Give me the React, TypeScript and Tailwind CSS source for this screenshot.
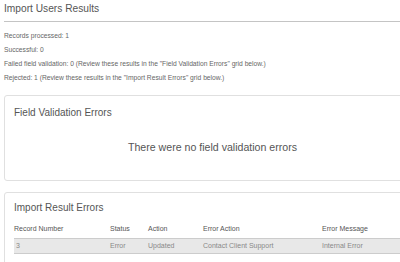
export default function App() {
  const font = { fontFamily: '"Liberation Sans", Arial, sans-serif' }
  return (
    <div className="w-[400px] h-[262px] overflow-hidden bg-white text-[#666]" style={font}>
      <div className="pl-[4px]">
        <h1 className="pt-[2px] text-[10.2px] leading-[14px] text-[#555]">Import Users Results</h1>
        <div className="mt-[5px] border-t border-[#c4c4c4]" />
        <div className="mt-[7px] flex flex-col text-[6.7px] leading-[14px] text-[#666]">
          <p>Records processed: 1</p>
          <p>Successful: 0</p>
          <p>Failed field validation: 0 (Review these results in the "Field Validation Errors" grid below.)</p>
          <p>Rejected: 1 (Review these results in the "Import Result Errors" grid below.)</p>
        </div>

        <div className="mt-[10px] -mr-[21px] h-[86px] rounded-[3px] border border-[#e0e0e0] px-[9px]">
          <h2 className="pt-[10px] text-[10px] leading-[13px] text-[#555]">Field Validation Errors</h2>
          <p className="mt-[22px] text-center text-[10.6px] leading-[13px] text-[#555]">
            There were no field validation errors
          </p>
        </div>

        <div className="mt-[11px] -mr-[21px] h-[80px] rounded-[3px] border border-[#e0e0e0] px-[9px]">
          <h2 className="pt-[8px] text-[10px] leading-[13px] text-[#555]">Import Result Errors</h2>
          <div className="mt-[11px] grid grid-cols-[96px_38px_55px_119px_1fr] text-[7px] leading-[8px]">
            <div className="pb-[5px] text-[#555]">Record Number</div>
            <div className="pb-[5px] text-[#555]">Status</div>
            <div className="pb-[5px] text-[#555]">Action</div>
            <div className="pb-[5px] text-[#555]">Error Action</div>
            <div className="pb-[5px] text-[#555]">Error Message</div>
            <div className="border-y border-[#ccc] bg-[#e8e8e8] py-[3px] pl-[2px] text-[#888]">3</div>
            <div className="border-y border-[#ccc] bg-[#e8e8e8] py-[3px] text-[#888]">Error</div>
            <div className="border-y border-[#ccc] bg-[#e8e8e8] py-[3px] text-[#888]">Updated</div>
            <div className="border-y border-[#ccc] bg-[#e8e8e8] py-[3px] text-[#888]">Contact Client Support</div>
            <div className="border-y border-[#ccc] bg-[#e8e8e8] py-[3px] text-[#888]">Internal Error</div>
          </div>
        </div>
      </div>
    </div>
  )
}
